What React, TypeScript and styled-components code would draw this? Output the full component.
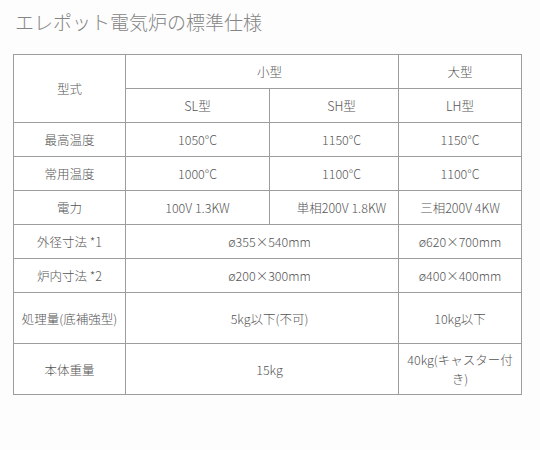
import React from 'react';
import styled, { createGlobalStyle } from 'styled-components';

const GlobalStyle = createGlobalStyle`
  html, body {
    margin: 0;
    padding: 0;
    background: #fdfdfd;
    font-family: "Noto Sans CJK JP", "Noto Sans", sans-serif;
  }
`;

const Page = styled.div`
  width: 540px;
  height: 450px;
  padding: 9px 0 0 13px;
  box-sizing: border-box;
`;

const Title = styled.h2`
  margin: 0 0 0 2px;
  height: 45px;
  font-size: 19px;
  font-weight: 300;
  line-height: 26px;
  color: #858585;
`;

const SpecTable = styled.table`
  width: 508px;
  border-collapse: collapse;
  table-layout: fixed;
  color: #555555;
  font-size: 12.5px;
  font-weight: 300;
`;

const Row = styled.tr<{ $tall?: boolean }>`
  height: ${(p) => (p.$tall ? '51px' : '34px')};
`;

const Cell = styled.td<{ $shift?: boolean }>`
  border: 1px solid #9d9d9d;
  text-align: center;
  vertical-align: middle;
  padding-top: 0;
  padding-bottom: 0;
  padding-left: ${(p) => (p.$shift ? '15px' : '7px')};
  padding-right: ${(p) => (p.$shift ? '0' : '7px')};
  line-height: 19px;
  background: #ffffff;
`;

type SpecRow = {
  label: string;
  values: string[];
  tall?: boolean;
};

const rows: SpecRow[] = [
  { label: '最高温度', values: ['1050°C', '1150°C', '1150°C'] },
  { label: '常用温度', values: ['1000°C', '1100°C', '1100°C'] },
  { label: '電力', values: ['100V 1.3KW', '単相200V 1.8KW', '三相200V 4KW'] },
  { label: '外径寸法 *1', values: ['ø355×540mm', 'ø620×700mm'] },
  { label: '炉内寸法 *2', values: ['ø200×300mm', 'ø400×400mm'] },
  { label: '処理量(底補強型)', values: ['5kg以下(不可)', '10kg以下'], tall: true },
  { label: '本体重量', values: ['15kg', '40kg(キャスター付き)'], tall: true },
];

const App: React.FC = () => {
  return (
    <Page>
      <GlobalStyle />
      <Title>エレポット電気炉の標準仕様</Title>
      <SpecTable>
        <colgroup>
          <col style={{ width: '112px' }} />
          <col style={{ width: '144px' }} />
          <col style={{ width: '129px' }} />
          <col style={{ width: '123px' }} />
        </colgroup>
        <tbody>
          <Row>
            <Cell rowSpan={2}>型式</Cell>
            <Cell colSpan={2} $shift>小型</Cell>
            <Cell>大型</Cell>
          </Row>
          <Row>
            <Cell>SL型</Cell>
            <Cell $shift>SH型</Cell>
            <Cell>LH型</Cell>
          </Row>
          {rows.map((row) => (
            <Row key={row.label} $tall={row.tall}>
              <Cell>{row.label}</Cell>
              {row.values.length === 3 ? (
                <>
                  <Cell>{row.values[0]}</Cell>
                  <Cell $shift>{row.values[1]}</Cell>
                  <Cell>{row.values[2]}</Cell>
                </>
              ) : (
                <>
                  <Cell colSpan={2} $shift>{row.values[0]}</Cell>
                  <Cell>{row.values[1]}</Cell>
                </>
              )}
            </Row>
          ))}
        </tbody>
      </SpecTable>
    </Page>
  );
};

export default App;
